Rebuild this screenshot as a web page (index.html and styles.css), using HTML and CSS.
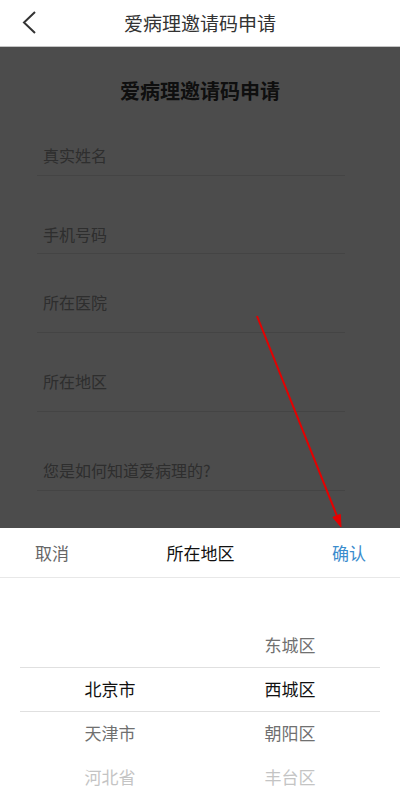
FILE: index.html
```html
<!DOCTYPE html>
<html lang="zh-CN">
<head>
  <meta charset="UTF-8">
  <title>爱病理邀请码申请</title>
  <link rel="stylesheet" href="styles.css">
</head>
<body>

  <div class="header">
    <span class="back">
      <svg width="14" height="24" viewBox="0 0 14 24">
        <polyline points="13,1 2,11.5 13,22" fill="none" stroke="#333" stroke-width="2" />
      </svg>
    </span>
    <h1 class="header-title">爱病理邀请码申请</h1>
    <span></span>
  </div>

  <div class="main">
    <h2 class="title">爱病理邀请码申请</h2>
    <form class="form">
      <div class="field first"><span class="label">真实姓名</span></div>
      <div class="field"><span class="label">手机号码</span></div>
      <div class="field low"><span class="label">所在医院</span></div>
      <div class="field low"><span class="label">所在地区</span></div>
      <div class="field last"><span class="label">您是如何知道爱病理的?</span></div>
    </form>
  </div>

  <div class="mask"></div>

  <!-- annotation arrow -->
  <svg class="arrow" width="400" height="792" viewBox="0 0 400 792">
    <line x1="257" y1="316" x2="337" y2="516" stroke="#e60000" stroke-width="2" />
    <polygon points="341,527 332.9,517.3 340.3,514.4" fill="#e60000" stroke="#e60000" stroke-width="1" />
  </svg>

  <div class="sheet">
    <div class="toolbar">
      <span class="cancel">取消</span>
      <span class="sheet-title">所在地区</span>
      <span class="confirm">确认</span>
    </div>
    <div class="picker">
      <div class="indicator"></div>
      <ul class="column offset">
        <li class="selected">北京市</li>
        <li class="near">天津市</li>
        <li class="far">河北省</li>
      </ul>
      <ul class="column">
        <li class="near">东城区</li>
        <li class="selected">西城区</li>
        <li class="near">朝阳区</li>
        <li class="far">丰台区</li>
      </ul>
    </div>
  </div>

</body>
</html>
```

FILE: styles.css
```css
body {
  margin: 0;
  font-family: "Noto Sans CJK SC", "Noto Sans", sans-serif;
  background: white;
  width: 400px;
  height: 792px;
  overflow: hidden;
}

.header {
  display: grid;
  grid-template-columns: 60px 1fr 60px;
  align-items: center;
  height: 46px;
  border-bottom: 1px solid #c4c4c4;
  background: white;
  position: relative;
  z-index: 3;
}

.back svg {
  display: block;
  margin-left: 22px;
}

.header-title {
  margin: 0;
  text-align: center;
  font-size: 19px;
  font-weight: normal;
  color: #333;
  line-height: 46px;
}

.main {
  padding-top: 30px;
}

.title {
  margin: 0;
  text-align: center;
  font-size: 20px;
  line-height: 28px;
  color: #333;
}

.form {
  margin: 0 55px 0 37px;
}

.field {
  padding: 47px 0 8px 6px;
  border-bottom: 1px solid #e5e5e5;
}

.field.first {
  padding-top: 39px;
  padding-bottom: 9px;
}

.field.low {
  padding-top: 37px;
  padding-bottom: 19px;
}

.field.last {
  padding-bottom: 9px;
}

.label {
  display: block;
  font-size: 16px;
  line-height: 22px;
  color: #999;
}

.mask {
  position: fixed;
  top: 47px;
  left: 0;
  right: 0;
  bottom: 0;
  background: rgba(0, 0, 0, 0.7);
  z-index: 1;
}

.arrow {
  position: absolute;
  top: 0;
  left: 0;
  z-index: 2;
}

.sheet {
  position: fixed;
  left: 0;
  right: 0;
  bottom: 0;
  height: 264px;
  background: white;
  z-index: 3;
}

.toolbar {
  display: flex;
  justify-content: space-between;
  align-items: center;
  height: 49px;
  padding: 0 34px 0 35px;
  border-bottom: 1px solid #e8e8e8;
  font-size: 17px;
}

.cancel {
  color: #666;
}

.sheet-title {
  color: #111;
}

.confirm {
  color: #3a8ccd;
}

.picker {
  position: relative;
  display: flex;
  margin: 0 20px;
}

.indicator {
  position: absolute;
  top: 89px;
  left: 0;
  right: 0;
  height: 43px;
  border-top: 1px solid #e0e0e0;
  border-bottom: 1px solid #e0e0e0;
}

.column {
  flex: 1;
  list-style: none;
  margin: 0;
  padding: 45px 0 0;
  text-align: center;
}

.column.offset {
  padding-top: 89px;
}

.column li {
  height: 44px;
  line-height: 44px;
  font-size: 17px;
  color: #666;
}

.column li.selected {
  color: #111;
}

.column li.near {
  color: #707070;
}

.column li.far {
  color: #c4c4c4;
}
```
